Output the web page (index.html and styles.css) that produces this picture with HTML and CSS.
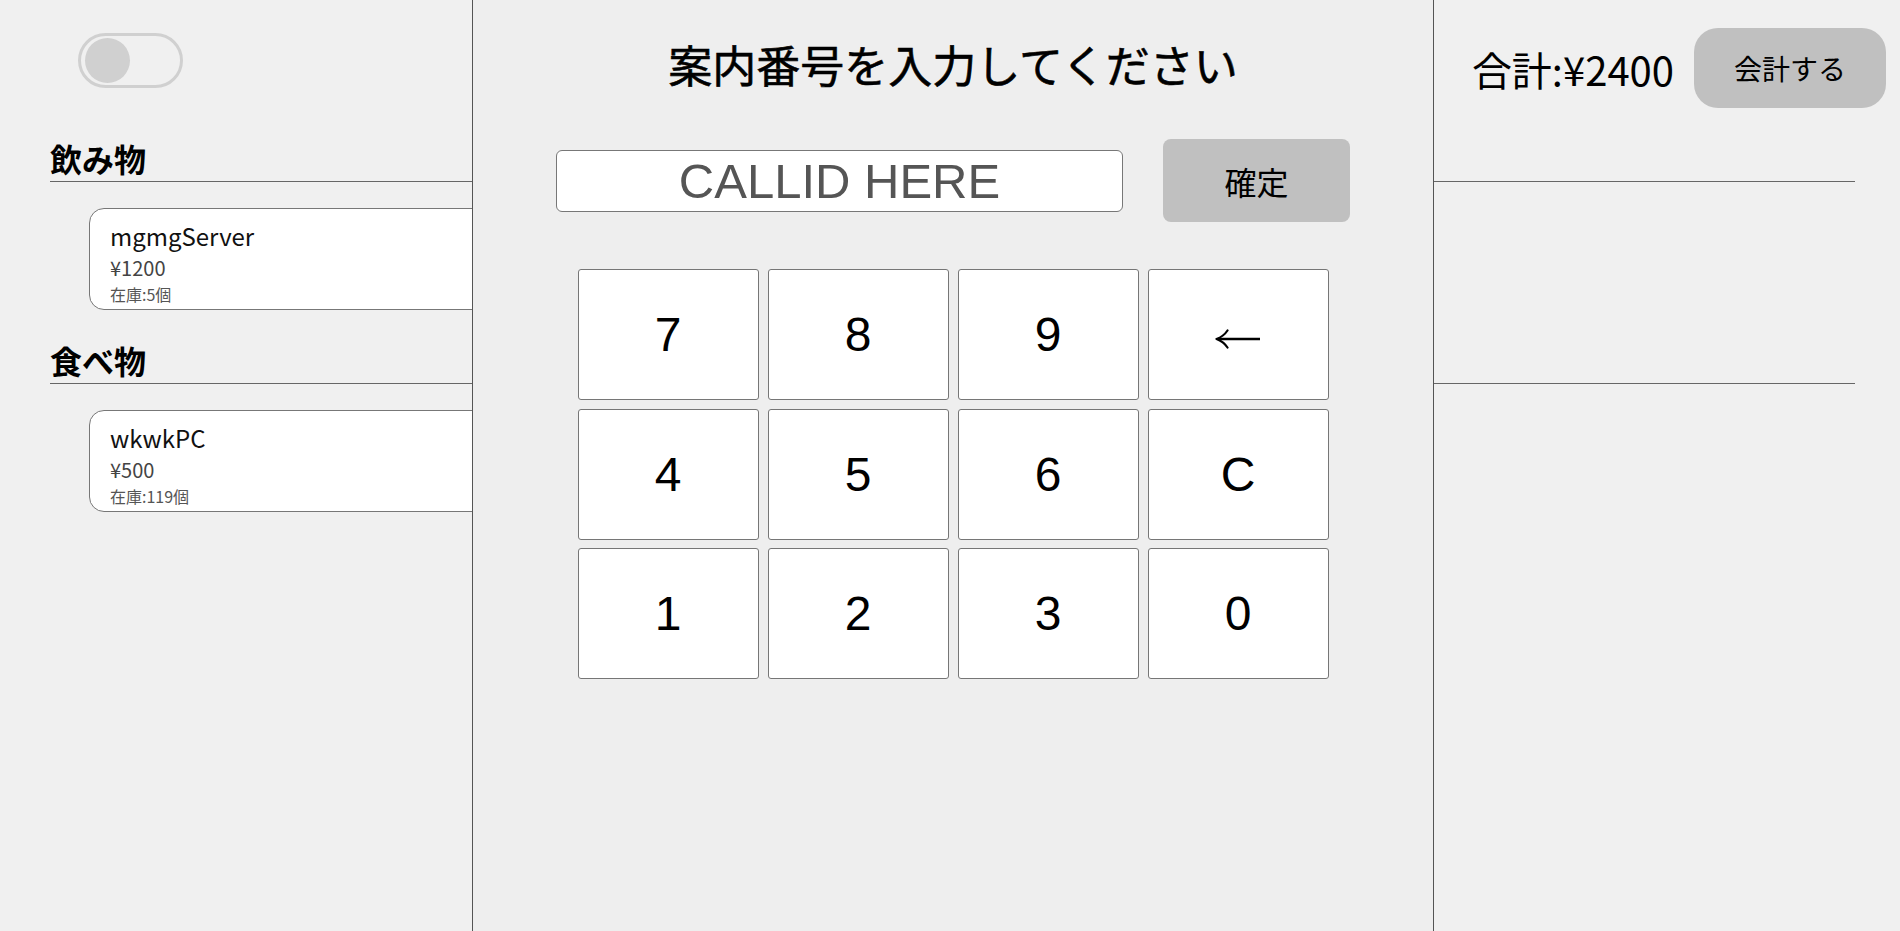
FILE: index.html
```html
<!DOCTYPE html>
<html lang="ja">
<head>
<meta charset="utf-8">
<title>POS</title>
<link rel="stylesheet" href="styles.css">
</head>
<body>
<div class="page">
  <header class="topbar">
    <div class="toggle"><span class="knob"></span></div>
    <div class="checkout">
      <span class="total">合計:¥2400</span>
      <button class="checkout-btn">会計する</button>
    </div>
  </header>

  <section class="category">
    <h2 class="category-title">飲み物</h2>
    <div class="item-card">
      <div class="item-name">mgmgServer</div>
      <div class="item-price">¥1200</div>
      <div class="item-stock">在庫:5個</div>
    </div>
  </section>

  <section class="category">
    <h2 class="category-title">食べ物</h2>
    <div class="item-card">
      <div class="item-name">wkwkPC</div>
      <div class="item-price">¥500</div>
      <div class="item-stock">在庫:119個</div>
    </div>
  </section>
</div>

<div class="modal">
  <h1 class="modal-title">案内番号を入力してください</h1>
  <div class="entry-row">
    <input class="callid" type="text" placeholder="CALLID HERE">
    <button class="confirm-btn">確定</button>
  </div>
  <div class="keypad">
    <button class="key">7</button>
    <button class="key">8</button>
    <button class="key">9</button>
    <button class="key key-back" aria-label="←"><svg class="arrow" width="46" height="20" viewBox="0 0 46 20"><path d="M3 10 H45" stroke="#000" stroke-width="2.4" fill="none"/><path d="M12.5 1.5 Q8.5 7.5 1.5 10 Q8.5 12.5 12.5 18.5" stroke="#000" stroke-width="2.2" fill="none" stroke-linecap="round" stroke-linejoin="round"/></svg></button>
    <button class="key">4</button>
    <button class="key">5</button>
    <button class="key">6</button>
    <button class="key">C</button>
    <button class="key">1</button>
    <button class="key">2</button>
    <button class="key">3</button>
    <button class="key">0</button>
  </div>
</div>
</body>
</html>
```

FILE: styles.css
```css
* { box-sizing: border-box; }

html, body {
  margin: 0;
  height: 100%;
}

body {
  background: #f0f0f0;
  font-family: "Noto Sans CJK JP", "Noto Sans", sans-serif;
  color: #000;
  overflow: hidden;
}

.page {
  padding: 0 45px 0 50px;
}

.topbar {
  display: flex;
  justify-content: space-between;
  align-items: flex-start;
  padding: 28px 0 0 28px;
  margin-right: -31px;
  height: 108px;
}

.toggle {
  width: 105px;
  height: 55px;
  margin-top: 5px;
  border: 3px solid #d0d0d0;
  border-radius: 28px;
  display: flex;
  align-items: center;
  padding: 0 4px;
}

.knob {
  width: 45px;
  height: 45px;
  border-radius: 50%;
  background: #d0d0d0;
}

.checkout {
  display: flex;
  align-items: center;
  gap: 20px;
}

.total {
  font-size: 40px;
  line-height: 58px;
  padding-top: 2px;
}

.checkout-btn {
  width: 192px;
  height: 80px;
  border: none;
  border-radius: 24px;
  background: #c0c0c0;
  font-family: "Noto Sans CJK JP", sans-serif;
  font-size: 28px;
  color: #000;
  padding: 0;
}

.category-title {
  margin: 27px 0 26px;
  font-size: 32px;
  font-weight: bold;
  line-height: 46px;
  border-bottom: 1px solid #666;
}

.item-card {
  margin-left: 39px;
  width: 440px;
  height: 102px;
  background: #fff;
  border: 1px solid #777;
  border-radius: 15px;
  padding: 10px 20px 0;
  overflow: hidden;
}

.item-name {
  font-size: 24px;
  line-height: 34px;
  color: #111;
}

.item-price {
  font-size: 20px;
  line-height: 30px;
  color: #444;
}

.item-stock {
  font-size: 16px;
  line-height: 23px;
  color: #555;
}

.modal {
  position: fixed;
  top: 0;
  left: 472px;
  width: 962px;
  height: 100%;
  background: #eeeeee;
  border-left: 1px solid #555;
  border-right: 1px solid #555;
  padding-top: 42px;
  font-family: "Liberation Sans", "Noto Sans CJK JP", sans-serif;
  display: flex;
  flex-direction: column;
  align-items: center;
}

.modal-title {
  margin: 0;
  font-size: 44px;
  line-height: 52px;
  font-weight: normal;
  -webkit-text-stroke: 0.6px #000;
}

.entry-row {
  margin-top: 45px;
  display: flex;
  align-items: center;
  gap: 40px;
}

.callid {
  width: 567px;
  height: 62px;
  border: 1px solid #777;
  border-radius: 6px;
  background: #fff;
  font-family: "Liberation Sans", sans-serif;
  font-size: 49px;
  text-align: center;
  padding: 0;
  color: #000;
}

.callid::placeholder {
  color: #555;
}

.confirm-btn {
  width: 187px;
  height: 83px;
  border: none;
  border-radius: 8px;
  background: #c0c0c0;
  font-family: "Liberation Sans", "Noto Sans CJK JP", sans-serif;
  font-size: 32px;
  color: #000;
  padding: 0;
}

.keypad {
  margin-top: 47px;
  display: grid;
  grid-template-columns: repeat(4, 181px);
  grid-auto-rows: 131px;
  column-gap: 9px;
  row-gap: 8.5px;
}

.key {
  background: #fff;
  border: 1px solid #767676;
  border-radius: 3px;
  font-family: "Liberation Sans", sans-serif;
  font-size: 48px;
  color: #000;
  padding: 0;
}

.key-back {
  display: flex;
  align-items: center;
  justify-content: center;
  padding-top: 8px;
}

.arrow {
  display: block;
}
```
